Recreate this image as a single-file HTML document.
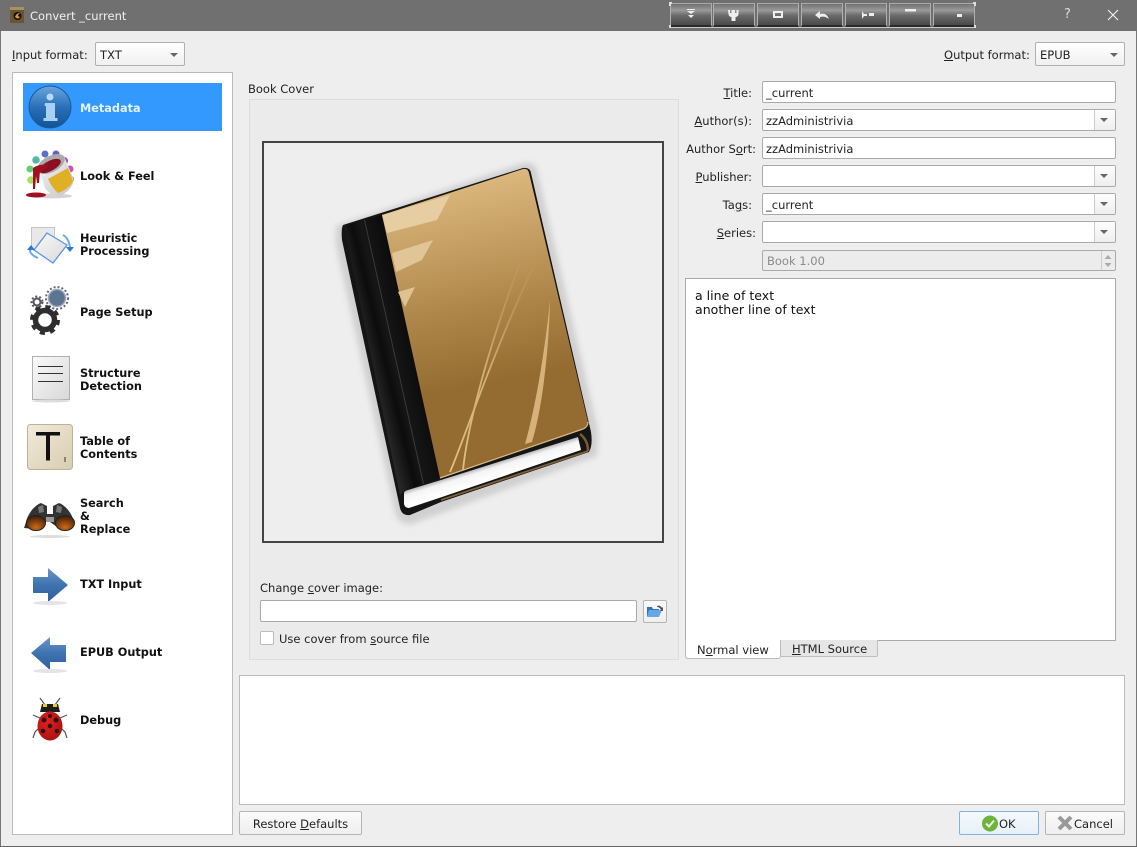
<!DOCTYPE html>
<html><head><meta charset="utf-8"><style>
html,body{margin:0;padding:0;width:1137px;height:847px;overflow:hidden;background:#eee}
body{font-family:"DejaVu Sans","Liberation Sans",sans-serif;font-size:11.5px;color:#222;position:relative}
.a{position:absolute;box-sizing:border-box}
.t{position:absolute;white-space:nowrap;line-height:14px}
.r{text-align:right}
u{text-underline-offset:1px}
.in{position:absolute;box-sizing:border-box;background:#fff;border:1px solid #aaa;border-radius:2px;height:22px;padding:0 3px;line-height:22px;white-space:nowrap}
.arr{position:absolute;right:0;top:0;width:20px;height:20px;border-left:1px solid #ccc;background:linear-gradient(#fdfdfd,#eee)}
.arr:after,.drop:after{content:"";position:absolute;left:5px;top:8px;border:4px solid transparent;border-top:4px solid #666;border-bottom:0}
.combo{position:absolute;box-sizing:border-box;height:24px;border:1px solid #b0b0b0;border-radius:2px;background:linear-gradient(#fff,#f0f0f0);line-height:24px;padding-left:4px}
.drop{position:absolute;right:3px;top:2px;width:16px;height:18px}
.lb{position:absolute;font-weight:bold;font-size:11.3px;color:#111;line-height:13px;left:80px;white-space:nowrap}
.tb{position:absolute;top:3px;height:24px;width:42px;border:1px solid #b0b0b0;border-bottom:2px solid #2a2a2a;border-top:1px solid #aaa;box-sizing:border-box;background:linear-gradient(#727272,#9a9a9a 30%,#6a6a6a 55%,#484848)}
.btn{position:absolute;box-sizing:border-box;height:24px;border:1px solid #b5b5b5;border-radius:2px;background:linear-gradient(#fbfbfb,#efefef);line-height:24px;text-align:center}
</style></head><body>

<!-- title bar -->
<div class="a" style="left:0;top:0;width:1137px;height:31px;background:#707070"></div>
<div class="a" style="left:0;top:31px;width:1px;height:816px;background:#777"></div>
<div class="a" style="right:0;top:31px;width:1px;height:816px;background:#777"></div>
<div class="a" style="left:0;top:846px;width:1137px;height:1px;background:#666"></div>
<svg class="a" style="left:10px;top:7px" width="14" height="16" viewBox="0 0 14 16"><rect width="14" height="16" fill="#6b5430"/><rect x="0" y="0" width="14" height="3" fill="#a8925c"/><circle cx="7.500" cy="9" r="4" fill="#141008"/><path d="M5 10c1-3 3-4 5-4-1 1-2 2-2 3l2 1c-1 2-3 2-5 0z" fill="#c89a48"/></svg>
<div class="t" style="left:30px;top:9px;color:#f0f0f0;font-size:11.5px">Convert _current</div>

<div class="a" style="left:669px;top:27px;width:306px;height:1px;background:#c8c8c8"></div>
<div class="tb" style="left:670px"></div><div class="tb" style="left:713px"></div><div class="tb" style="left:757px"></div><div class="tb" style="left:801px"></div><div class="tb" style="left:845px"></div><div class="tb" style="left:889px"></div><div class="tb" style="left:933px"></div>
<svg class="a" style="left:669px;top:2px" width="307" height="26" viewBox="669 2 307 26" fill="#eee">
<path d="M687 9h8v1h-8zM687 11h8l-4 3zM688 15h6l-3 3z"/>
<path d="M728 10l2 0v3h1.500v-3h3.500v3h1.500v-3l2 0v4c0 2-2 3-3 3v4h-4v-4c-1 0-3-1-3-3z"/>
<path d="M773 11h10v7h-10z M775 13v3h6v-3z" fill-rule="evenodd"/>
<path d="M815 15l5-4v3c4-1 7 0 9 5-3-2-5-3-9-2v2z"/>
<path d="M862 11l2 3h3v2h-3l-2 3zM869 13h5v3h-5z"/>
<path d="M905 9h11v2.500h-11z"/>
<path d="M957 14h5v3h-5z"/>
<path d="M669 2h3v2h-1v2h-2zM973 2h3v4h-2v-2h-1zM669 25h2v3h-2zM974 25h2v3h-2z" fill="#ddd"/>
</svg>
<div class="t" style="left:1064px;top:8px;color:#ddd;font-size:13px">?</div>
<svg class="a" style="left:1107px;top:9px" width="12" height="12"><path d="M1 1l10 10M11 1L1 11" stroke="#eee" stroke-width="1.200"/></svg>

<!-- format row -->
<div class="t" style="left:12px;top:48px"><u>I</u>nput format:</div>
<div class="combo" style="left:95px;top:42px;width:90px">TXT<span class="drop"></span></div>
<div class="t" style="left:944px;top:48px"><u>O</u>utput format:</div>
<div class="combo" style="left:1035px;top:42px;width:90px">EPUB<span class="drop"></span></div>

<!-- sidebar -->
<div class="a" style="left:12px;top:72px;width:221px;height:763px;background:#fff;border:1px solid #bbb"></div>
<div class="a" style="left:23px;top:83px;width:199px;height:48px;background:#3399ff"></div>
<div class="lb" style="top:102px;color:#e4f2ff">Metadata</div>
<div class="lb" style="top:170px">Look &amp; Feel</div>
<div class="lb" style="top:232px">Heuristic<br>Processing</div>
<div class="lb" style="top:306px">Page Setup</div>
<div class="lb" style="top:367px">Structure<br>Detection</div>
<div class="lb" style="top:435px">Table of<br>Contents</div>
<div class="lb" style="top:497px">Search<br>&amp;<br>Replace</div>
<div class="lb" style="top:578px">TXT Input</div>
<div class="lb" style="top:646px">EPUB Output</div>
<div class="lb" style="top:714px">Debug</div>

<svg class="a" style="left:0;top:0" width="240" height="760" viewBox="0 0 240 760">
<defs>
<linearGradient id="bl" x1="0" y1="0" x2="0" y2="1"><stop offset="0" stop-color="#6aa6de"/><stop offset=".5" stop-color="#2a70b8"/><stop offset="1" stop-color="#115496"/></linearGradient>
<linearGradient id="ar" x1="0" y1="0" x2="0" y2="1"><stop offset="0" stop-color="#6a96c8"/><stop offset=".5" stop-color="#3f72b0"/><stop offset="1" stop-color="#2f5f9e"/></linearGradient>
<linearGradient id="tile" x1="0" y1="0" x2="1" y2="1"><stop offset="0" stop-color="#f2eadb"/><stop offset="1" stop-color="#d8cdb0"/></linearGradient>
<linearGradient id="doc" x1="0" y1="0" x2="1" y2="1"><stop offset="0" stop-color="#fafafa"/><stop offset="1" stop-color="#d8d8d8"/></linearGradient>
<linearGradient id="bk" x1="0" y1="0" x2="1" y2="1"><stop offset="0" stop-color="#f8f8f8"/><stop offset="1" stop-color="#c4c4c4"/></linearGradient>
<radialGradient id="lens" cx=".5" cy=".8" r=".8"><stop offset="0" stop-color="#d06a18"/><stop offset="1" stop-color="#3a1a08"/></radialGradient>
<radialGradient id="lady" cx=".4" cy=".35" r=".8"><stop offset="0" stop-color="#e02020"/><stop offset="1" stop-color="#a01010"/></radialGradient>
</defs>
<!-- info -->
<circle cx="50" cy="107" r="21" fill="url(#bl)" stroke="#175a9c"/>
<path d="M45 103h10v15h2.500v3h-14v-3H46v-12h-1.500z" fill="#a8d0f2"/><circle cx="50" cy="97" r="3.500" fill="#b8daf5"/>
<!-- look & feel -->
<g><circle cx="36" cy="160" r="3.800" fill="#50b8a8"/><circle cx="45" cy="154" r="3.500" fill="#5a70d0"/><circle cx="56" cy="154" r="3.500" fill="#6a5ac8"/><circle cx="64" cy="161" r="4" fill="#a050c0"/><circle cx="70" cy="169" r="3.500" fill="#d050b0"/><circle cx="71" cy="179" r="3" fill="#e04060"/><circle cx="30" cy="169" r="3.500" fill="#60d070"/><circle cx="31" cy="180" r="3.800" fill="#a8e060"/></g>
<ellipse cx="52" cy="196" rx="20" ry="2.500" fill="#d4d4d4"/><ellipse cx="36" cy="195" rx="10" ry="2.500" fill="#a0101c"/>
<path d="M39 170L64 156L74 180Q72 190 60 196Q50 196 45 188z" fill="url(#bk)"/>
<path d="M48 179L68 168L73 181Q69 189 58 193Q52 188 48 179z" fill="#dfb026"/>
<ellipse cx="51" cy="164" rx="15" ry="8" transform="rotate(-28 51 164)" fill="#aaa"/>
<ellipse cx="50" cy="166" rx="12" ry="5" transform="rotate(-28 50 166)" fill="#8a1020"/>
<path d="M33 168c4-3 10-4 15-3l-4 5-4 1-1 12-2 0-1-7-1 13h-2z" fill="#a01020"/>
<!-- heuristic -->
<path d="M31.500 227.500h23v22h-23z" fill="#e8e8e8" stroke="#c4c4c4"/>
<path d="M47 233l20 12-14 18-19-13z" fill="url(#doc)" stroke="#5a96e0" stroke-width="1.300"/>
<path d="M63 235c4 2 6 6 7 12" fill="none" stroke="#70a8ee" stroke-width="2"/><path d="M66 247h8l-4 5z" fill="#2878e0"/>
<path d="M30 250c0 3 3 6 8 8" fill="none" stroke="#70a8ee" stroke-width="2"/><path d="M27 250l4-5 4 5z" fill="#2878e0"/>
<!-- page setup -->
<g fill="none"><circle cx="57" cy="298" r="8.500" fill="#5d7590" stroke="#9ab" stroke-width="1.500"/><circle cx="57" cy="298" r="11" stroke="#667" stroke-width="2" stroke-dasharray="2 2"/>
<circle cx="37" cy="302" r="3.500" stroke="#556" stroke-width="2"/><circle cx="37" cy="302" r="5.500" stroke="#555" stroke-width="2" stroke-dasharray="2 2"/>
<circle cx="45" cy="320" r="9.500" stroke="#2e2e2e" stroke-width="5.500"/><circle cx="45" cy="320" r="13" stroke="#2e2e2e" stroke-width="4" stroke-dasharray="5 5.200"/></g>
<!-- structure -->
<rect x="32.500" y="356.500" width="37" height="43" fill="url(#doc)" stroke="#b0b0b0"/><ellipse cx="51" cy="401" rx="19" ry="1.500" fill="#ddd"/>
<path d="M38 366.500h25M38 373.500h25M38 381.500h25" stroke="#333" stroke-width="1"/>
<!-- toc -->
<rect x="27.500" y="424.500" width="45" height="45" rx="3" fill="url(#tile)" stroke="#bcb298"/>
<path d="M36 432h24v3.500H50v25h-4v-25H36z" fill="#111"/><path d="M64.500 457h1v5h-1z" fill="#333"/>
<!-- search -->
<ellipse cx="50" cy="536.500" rx="20" ry="1.500" fill="#ddd"/>
<path d="M26 522C28 513 35 505 41 503l6 3v8h6v-8l6-3c6 2 13 10 15 19l-4 6-10 1-10-7h-6l-10 7-10-1z" fill="#333"/>
<path d="M38 507l5-2 1 7-5 1zM62 507l-5-2-1 7 5 1z" fill="#777"/>
<ellipse cx="36" cy="523" rx="9.500" ry="7.500" fill="url(#lens)" stroke="#222"/><ellipse cx="65" cy="523" rx="9.500" ry="7.500" fill="url(#lens)" stroke="#222"/>
<rect x="46" y="517" width="8" height="5" fill="#999"/>
<!-- arrows -->
<path d="M33 577h15v-9l20 17-20 17v-9H33z" fill="url(#ar)"/><ellipse cx="50" cy="603" rx="17" ry="2" fill="#e4e4e4"/>
<path d="M66 645H50v-8l-19 16 19 17v-8h16z" fill="url(#ar)"/><ellipse cx="50" cy="671" rx="17" ry="2" fill="#e4e4e4"/>
<!-- debug -->
<path d="M40 698l5 7M60 698l-5 7M33 715l7 3M67 715l-7 3M33 738l2-6 4-4M67 738l-2-6-4-4" stroke="#555" stroke-width="1.200" fill="none"/>
<path d="M42 704h16l2 8H40z" fill="#1c1c1c"/><path d="M43 704h4v3h-4zM53 704h4v3h-4z" fill="#e8d020"/>
<ellipse cx="50" cy="726" rx="12.500" ry="14.500" fill="url(#lady)"/>
<circle cx="44" cy="720" r="2.500" fill="#311"/><circle cx="56" cy="720" r="2.500" fill="#311"/><circle cx="50" cy="716" r="2" fill="#311"/><circle cx="43" cy="731" r="2.300" fill="#311"/><circle cx="57" cy="731" r="2.300" fill="#311"/><circle cx="50" cy="726" r="2.300" fill="#311"/>
</svg>

<!-- cover group -->
<div class="t" style="left:248px;top:82px">Book Cover</div>
<div class="a" style="left:249px;top:99px;width:430px;height:561px;background:#ebebeb;border:1px solid #ddd"></div>
<div class="a" style="left:262px;top:141px;width:402px;height:402px;border:2px solid #444;background:#eee"></div>
<svg class="a" style="left:264px;top:143px" width="398" height="398" viewBox="264 143 398 398">
<defs>
<linearGradient id="tan" gradientUnits="userSpaceOnUse" x1="450" y1="170" x2="500" y2="420"><stop offset="0" stop-color="#e0bd83"/><stop offset=".55" stop-color="#ae864a"/><stop offset=".85" stop-color="#946b30"/><stop offset="1" stop-color="#946b30"/></linearGradient>
<linearGradient id="sp" gradientUnits="userSpaceOnUse" x1="342" y1="345" x2="424" y2="325"><stop offset="0" stop-color="#0e0e0e"/><stop offset=".22" stop-color="#2e2e2e"/><stop offset=".45" stop-color="#0c0c0c"/><stop offset=".55" stop-color="#161616"/><stop offset="1" stop-color="#050505"/></linearGradient>
<linearGradient id="st" gradientUnits="userSpaceOnUse" x1="460" y1="470" x2="530" y2="270"><stop offset="0" stop-color="#e0bf88"/><stop offset=".5" stop-color="#d0ad76"/><stop offset="1" stop-color="#c9a46b" stop-opacity=".2"/></linearGradient>
<linearGradient id="pg" gradientUnits="userSpaceOnUse" x1="490" y1="462" x2="495" y2="478"><stop offset="0" stop-color="#999"/><stop offset=".4" stop-color="#f4f4f4"/><stop offset="1" stop-color="#fff"/></linearGradient>
<filter id="blr" x="-10%" y="-10%" width="120%" height="120%"><feGaussianBlur stdDeviation="3"/></filter>
</defs>
<path d="M336 226L523 163Q534 161 537 170L598 430L597 456L412 524Q399 526 395 512L336 245z" fill="#d0d0d0" filter="url(#blr)"/>
<path d="M343 225L523 168Q530 167 531 173L591 432Q593 445 589 452L441 502L410 515Q402 516 400 508L342 240Q341 229 343 225z" fill="#151515"/>
<path d="M404 493Q404 491 408 490L441 480L578 437L581 450L442 497L409 508Q405 508 404 504z" fill="url(#pg)"/>
<path d="M441 500L588 451" stroke="#7d6238" stroke-width="1.800" fill="none"/>
<path d="M580 434Q588 440 588 451" stroke="#7a5c30" stroke-width="2.500" fill="none"/>
<path d="M344 226L382 215L440 478L404 491L400 495z" fill="url(#sp)"/>
<path d="M364.500 220L423.500 484" stroke="#3a3a3a" stroke-width="1"/>
<path d="M382 215L523 169Q528 168 529 173L588 422Q588 427 583 429L440 478z" fill="url(#tan)"/>
<path d="M382 215L450 195L437 220L387 233z" fill="#e6cda2"/>
<path d="M392 253L433 240L422 260L396 272z" fill="#e0c696"/>
<path d="M398 292L415 287L405 307z" fill="#dfc28f"/>
<path d="M450 472C462 445 490 360 533 267" stroke="url(#st)" stroke-width="1.800" fill="none"/>
<path d="M463 470C466 440 480 370 520 263" stroke="url(#st)" stroke-width="1.800" fill="none"/>
<path d="M525 444C536 405 545 350 550 300C549 350 542 410 532 442z" fill="#d6b27a"/>
<path d="M440 478L583 429Q588 427 588 422" stroke="#d8bb88" stroke-width="1.200" fill="none"/>
</svg>

<div class="t" style="left:260px;top:581px">Change <u>c</u>over image:</div>
<div class="in" style="left:260px;top:600px;width:377px"></div>
<div class="btn" style="left:643px;top:600px;width:24px;height:23px"></div>
<svg class="a" style="left:646px;top:604px" width="18" height="15"><path d="M1 3h5l1 2h6v7H1z" fill="#2f73c0"/><path d="M3 6h13l-3 7H1z" fill="#64a8e8"/><path d="M11 2c2-1 4 0 5 2l1-1v4h-3l1-1c-1-2-2-3-4-3z" fill="#555"/></svg>
<div class="a" style="left:260px;top:631px;width:14px;height:14px;background:#fff;border:1px solid #bbb;border-radius:2px"></div>
<div class="t" style="left:279px;top:632px">Use cover from <u>s</u>ource file</div>

<!-- metadata fields -->
<div class="t r" style="left:680px;width:72px;top:86px"><u>T</u>itle:</div>
<div class="in" style="left:762px;top:81px;width:354px">_current</div>
<div class="t r" style="left:680px;width:72px;top:114px"><u>A</u>uthor(s):</div>
<div class="in" style="left:762px;top:109px;width:354px">zzAdministrivia<span class="arr"></span></div>
<div class="t r" style="left:680px;width:76px;top:142px">Author S<u>o</u>rt:</div>
<div class="in" style="left:762px;top:137px;width:354px">zzAdministrivia</div>
<div class="t r" style="left:680px;width:72px;top:170px"><u>P</u>ublisher:</div>
<div class="in" style="left:762px;top:165px;width:354px"><span class="arr"></span></div>
<div class="t r" style="left:680px;width:72px;top:198px">Ta<u>g</u>s:</div>
<div class="in" style="left:762px;top:193px;width:354px">_current<span class="arr"></span></div>
<div class="t r" style="left:680px;width:76px;top:226px"><u>S</u>eries:</div>
<div class="in" style="left:762px;top:221px;width:354px"><span class="arr"></span></div>
<div class="in" style="left:762px;top:250px;width:354px;height:21px;background:#ececec;color:#8a8a8a;padding-left:4px;line-height:20px">Book 1.00
<svg class="a" style="right:0;top:0" width="14" height="19"><path d="M.5 0v19" stroke="#ccc"/><path d="M3.500 8l3.500-4 3.500 4z" fill="#aaa"/><path d="M3.500 12l3.500 4 3.500-4z" fill="#aaa"/></svg></div>

<div class="a" style="left:685px;top:278px;width:431px;height:363px;background:#fff;border:1px solid #aaa"></div>
<div class="t" style="left:695px;top:289px;font-size:12.550px;color:#111">a line of text<br>another line of text</div>

<div class="a" style="left:780px;top:640px;width:98px;height:17px;background:#e6e6e6;border:1px solid #c0c0c0;border-top:0;border-radius:0 0 2px 2px"></div>
<div class="t" style="left:792px;top:642px"><u>H</u>TML Source</div>
<div class="a" style="left:685px;top:640px;width:96px;height:19px;background:#fff;border:1px solid #bbb;border-top:0;border-radius:0 0 3px 3px"></div>
<div class="t" style="left:697px;top:643px">N<u>o</u>rmal view</div>

<!-- help -->
<div class="a" style="left:239px;top:675px;width:886px;height:130px;background:#fff;border:1px solid #bbb"></div>

<!-- buttons -->
<div class="btn" style="left:239px;top:811px;width:123px">Restore <u>D</u>efaults</div>
<div class="btn" style="left:959px;top:811px;width:80px;border-color:#7fb4de;background:linear-gradient(#f4f9fd,#e6f0f8)"></div>
<svg class="a" style="left:981px;top:815px" width="18" height="17"><circle cx="9" cy="8.500" r="8" fill="#6db33f"/><path d="M5 8.500l3 3 5-6" fill="none" stroke="#e8f4d8" stroke-width="2"/></svg>
<div class="t" style="left:999px;top:817px">OK</div>
<div class="btn" style="left:1045px;top:811px;width:80px"></div>
<svg class="a" style="left:1057px;top:815px" width="16" height="16"><path d="M2 2l12 12M14 2L2 14" stroke="#999" stroke-width="4"/></svg>
<div class="t" style="left:1074px;top:817px">Cancel</div>
</body></html>
